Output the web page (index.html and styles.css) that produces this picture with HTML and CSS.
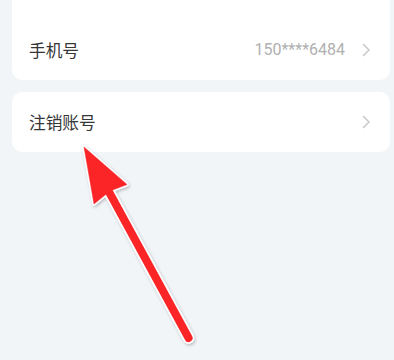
FILE: index.html
```html
<!DOCTYPE html>
<html lang="zh-CN">
<head>
<meta charset="utf-8">
<title>账号设置</title>
<link rel="stylesheet" href="styles.css">
</head>
<body>
<div class="page">
  <div class="card card-top">
    <div class="row">
      <span class="label">手机号</span>
      <span class="right">
        <span class="value">150****6484</span>
        <svg class="chev" width="9" height="14" viewBox="0 0 9 14"><polyline points="1.5,1.5 7,7 1.5,12.5" fill="none" stroke="#c6c8cc" stroke-width="1.5" stroke-linecap="round" stroke-linejoin="round"/></svg>
      </span>
    </div>
  </div>
  <div class="card">
    <div class="row">
      <span class="label">注销账号</span>
      <span class="right">
        <svg class="chev" width="9" height="14" viewBox="0 0 9 14"><polyline points="1.5,1.5 7,7 1.5,12.5" fill="none" stroke="#c6c8cc" stroke-width="1.5" stroke-linecap="round" stroke-linejoin="round"/></svg>
      </span>
    </div>
  </div>
</div>
<svg class="arrow" width="394" height="360" viewBox="0 0 394 360">
  <defs>
    <filter id="sh" x="-20%" y="-20%" width="140%" height="140%">
      <feDropShadow dx="1" dy="1.5" stdDeviation="1.5" flood-color="#000" flood-opacity="0.25"/>
    </filter>
  </defs>
  <g filter="url(#sh)">
    <line x1="108" y1="190" x2="188.6" y2="338" stroke="#fff" stroke-width="11.5" stroke-linecap="round"/>
    <polygon points="84,147 127,184.5 110,191 94,204" fill="#fff" stroke="#fff" stroke-width="3.5" stroke-linejoin="round"/>
  </g>
  <line x1="108" y1="190" x2="188.6" y2="338" stroke="#fb2528" stroke-width="8" stroke-linecap="round"/>
  <polygon points="84,147 127,184.5 110,191 94,204" fill="#fb2528" stroke="#fb2528" stroke-width="0.5" stroke-linejoin="round"/>
</svg>
</body>
</html>
```
FILE: styles.css
```css
html, body {
  margin: 0;
  padding: 0;
  background: #f2f5f8;
}
body {
  width: 394px;
  height: 360px;
  overflow: hidden;
  position: relative;
  font-family: "Noto Sans CJK SC", "Noto Sans", sans-serif;
}
.page {
  display: flex;
  flex-direction: column;
  gap: 12px;
  padding: 0 4px 0 12px;
}
.card {
  background: #fff;
  border-radius: 10px;
}
.card-top {
  border-radius: 0 0 10px 10px;
  padding-top: 20px;
}
.row {
  height: 60px;
  display: flex;
  align-items: center;
  justify-content: space-between;
  padding: 0 19px 0 17px;
}
.label {
  font-size: 16.7px;
  color: #363636;
  line-height: 1;
}
.right {
  display: flex;
  align-items: center;
  gap: 17px;
}
.value {
  font-family: Roboto, "Liberation Sans", sans-serif;
  font-size: 16px;
  color: #b0b0b0;
  line-height: 1;
}
.chev {
  display: block;
}
.arrow {
  position: absolute;
  left: 0;
  top: 0;
  pointer-events: none;
}
```
